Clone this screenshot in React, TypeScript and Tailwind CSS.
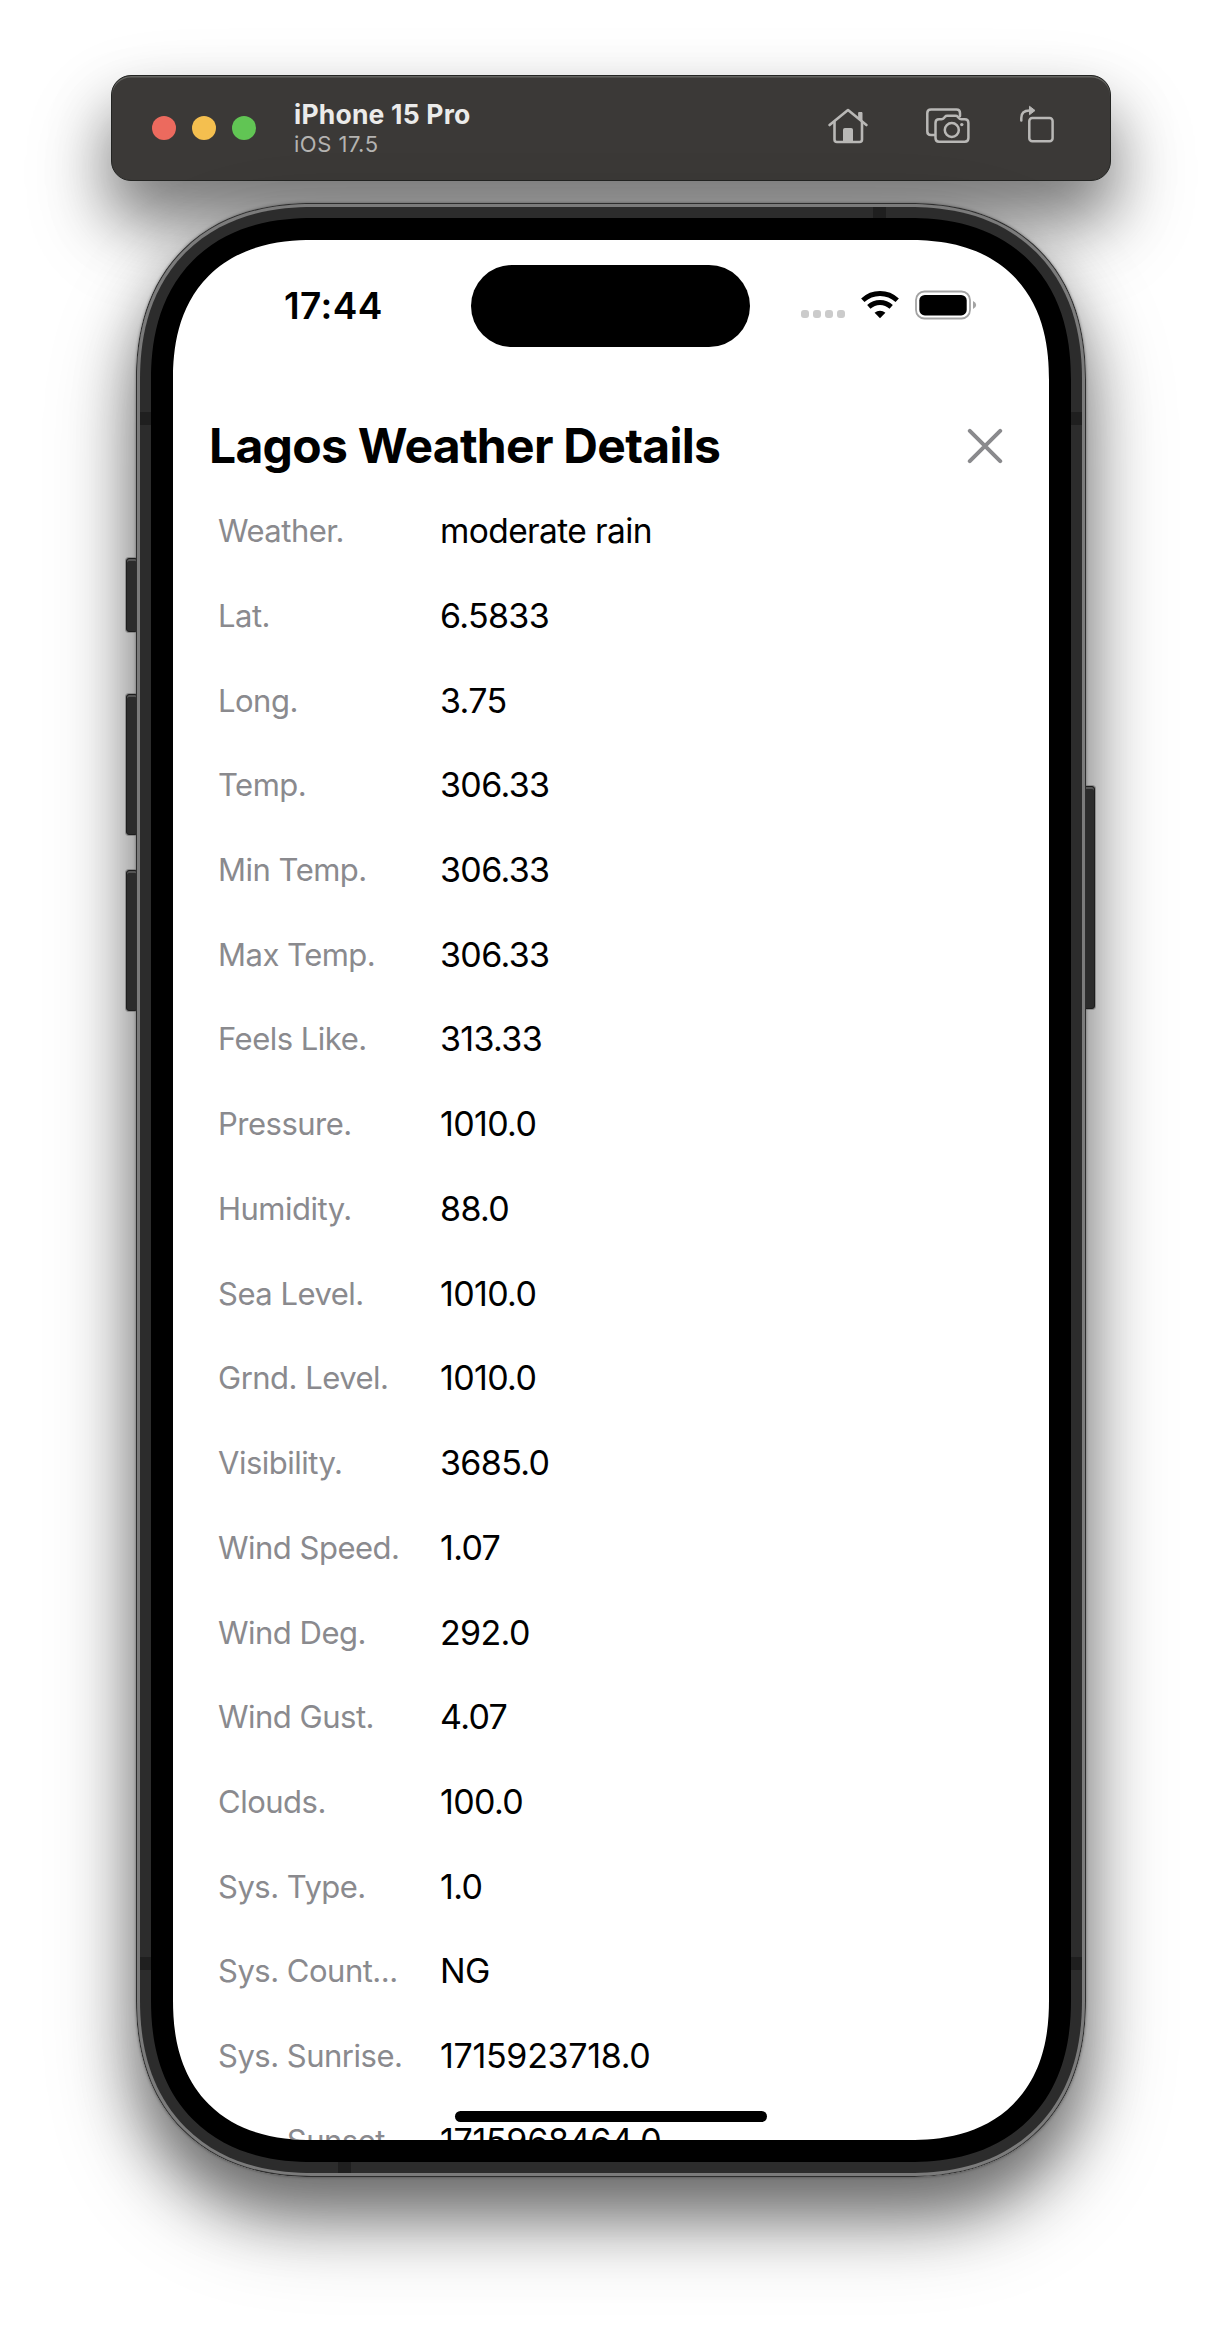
const rows: [string, string][] = [
  ["Weather.", "moderate rain"],
  ["Lat.", "6.5833"],
  ["Long.", "3.75"],
  ["Temp.", "306.33"],
  ["Min Temp.", "306.33"],
  ["Max Temp.", "306.33"],
  ["Feels Like.", "313.33"],
  ["Pressure.", "1010.0"],
  ["Humidity.", "88.0"],
  ["Sea Level.", "1010.0"],
  ["Grnd. Level.", "1010.0"],
  ["Visibility.", "3685.0"],
  ["Wind Speed.", "1.07"],
  ["Wind Deg.", "292.0"],
  ["Wind Gust.", "4.07"],
  ["Clouds.", "100.0"],
  ["Sys. Type.", "1.0"],
  ["Sys. Count...", "NG"],
  ["Sys. Sunrise.", "1715923718.0"],
  ["Sys. Sunset.", "1715968464.0"],
];

function HomeIcon() {
  return (
    <svg width="40" height="36" viewBox="0 0 40 36" fill="none" stroke="#b9b8b6" strokeWidth="2.6" strokeLinecap="round" strokeLinejoin="round">
      <path d="M1.6 17 L20 2 L38.4 17" />
      <path d="M6.5 14 V31.5 Q6.5 34 9 34 H31.5 Q34 34 34 31.5 V14" />
      <path d="M31 4.5 H34 V13 L31 10.5 Z" fill="#b9b8b6" strokeWidth="1" />
      <path d="M15.5 34 V21.5 Q15.5 20.5 16.5 20.5 H23.5 Q24.5 20.5 24.5 21.5 V34 Z" fill="#b9b8b6" strokeWidth="1" />
    </svg>
  );
}

function ScreenshotIcon() {
  return (
    <svg width="44" height="36" viewBox="0 0 44 36" fill="none" stroke="#b9b8b6" strokeWidth="2.5" strokeLinecap="round" strokeLinejoin="round">
      <path d="M8.5 27 H5 Q1.3 27 1.3 23.5 V5 Q1.3 1.5 5 1.5 H30.5 Q34 1.5 34 5 V8" />
      <path d="M9.5 15 Q9.5 11.3 13 11.3 H15.5 Q17 11.3 18 10 L19 8.8 Q19.8 7.8 21.2 7.8 H29.5 Q31 7.8 31.8 8.8 L32.8 10 Q33.8 11.3 35.3 11.3 H38.8 Q42.4 11.3 42.4 15 V30 Q42.4 33.7 38.8 33.7 H13 Q9.5 33.7 9.5 30 Z" />
      <circle cx="25.8" cy="22" r="7" />
      <circle cx="35.8" cy="16.6" r="1.7" fill="#b9b8b6" stroke="none" />
    </svg>
  );
}

function RotateIcon() {
  return (
    <svg width="34" height="38" viewBox="0 0 34 38" fill="none" stroke="#b9b8b6" strokeWidth="2.5" strokeLinecap="round">
      <rect x="9.3" y="13" width="23.3" height="23.3" rx="3" />
      <path d="M1.3 15.5 V13 Q1.3 5.5 9.5 5.5" />
      <path d="M9.8 1.5 L15 5.5 L9.8 9.5 Z" fill="#b9b8b6" strokeWidth="1" strokeLinejoin="round" />
    </svg>
  );
}

function WifiIcon() {
  return (
    <svg width="38" height="28" viewBox="0 0 38 28" fill="none" stroke="#000" strokeWidth="4.9">
      <path d="M1.8 9.3 C11.5 .2 26.5 .2 36.2 9.3" />
      <path d="M7.8 15.9 C14.3 10 23.7 10 30.2 15.9" />
      <path d="M19 27.2 L13.6 21.8 C16.7 19 21.3 19 24.4 21.8 Z" fill="#000" stroke="none" />
    </svg>
  );
}

function BatteryIcon() {
  return (
    <svg width="62" height="30" viewBox="0 0 62 30" fill="none">
      <rect x="1" y="1.5" width="54" height="27" rx="8.5" stroke="#a3a3a3" strokeWidth="1.8" />
      <rect x="4.3" y="5" width="47.4" height="20.4" rx="5.5" fill="#000" />
      <path d="M58 11 Q61.2 12.5 61.2 15 Q61.2 17.5 58 19 Z" fill="#a3a3a3" />
    </svg>
  );
}

function Toolbar() {
  return (
    <header className="box-border flex h-[106px] w-[1000px] items-center rounded-[20px] border border-[#232422] bg-[#3b3937] pl-10 pr-[56px] shadow-[inset_0_1.5px_0_#646461,0_36px_60px_rgba(0,0,0,0.4),0_44px_90px_rgba(0,0,0,0.24)]">
      <div className="flex gap-4">
        <span className="size-6 rounded-full bg-[#ec6a5e]" />
        <span className="size-6 rounded-full bg-[#f4bf4f]" />
        <span className="size-6 rounded-full bg-[#61c554]" />
      </div>
      <div className="ml-[38px] flex flex-1 flex-col pt-px">
        <div className="text-[26.5px] leading-[31px] font-bold tracking-[0.2px] text-[#ebebea]">iPhone 15 Pro</div>
        <div className="text-[22px] leading-[28px] tracking-[0.5px] text-[#b4b3b1]">iOS 17.5</div>
      </div>
      <div className="flex items-center pb-1">
        <HomeIcon />
        <div className="ml-[58px]"><ScreenshotIcon /></div>
        <div className="-mt-1 ml-[50px]"><RotateIcon /></div>
      </div>
    </header>
  );
}

function SideButton({ className }: { className: string }) {
  return (
    <div className={"absolute rounded-[3px] border border-[#1d1d1d] bg-[#2c2c2c] shadow-[inset_0_2px_0_#555,0_0_0_1px_rgba(110,110,110,0.6)] " + className} />
  );
}

function Antenna({ className }: { className: string }) {
  return <div className={"absolute bg-[#1f1f1f] " + className} />;
}

export default function App() {
  return (
    <div className="flex h-[2328px] w-[1222px] flex-col items-center overflow-hidden bg-white pt-[75px] font-['Inter','Liberation_Sans',sans-serif]">
      <Toolbar />
      <div className="relative mt-[22px] h-[1974px] w-[950px] shrink-0 rounded-[177px] [corner-shape:superellipse(1.18)] shadow-[0_36px_60px_rgba(0,0,0,0.44),0_44px_90px_rgba(0,0,0,0.28),0_0_3px_rgba(0,0,0,0.4)]">
        <SideButton className="top-[355px] -left-[10px] h-[74px] w-3" />
        <SideButton className="top-[491px] -left-[10px] h-[141px] w-3" />
        <SideButton className="top-[667px] -left-[10px] h-[141px] w-3" />
        <SideButton className="top-[583px] -right-[9px] h-[223px] w-3" />
        <div className="relative h-full rounded-[177px] border border-[#2e2e2e] bg-[#7b7b7b] p-[3px] [corner-shape:superellipse(1.18)]">
          <div className="relative h-full rounded-[173px] bg-[#2c2c2c] p-[11px] [corner-shape:superellipse(1.18)]">
            <Antenna className="top-[205px] left-0 h-[13px] w-[11px]" />
            <Antenna className="top-[205px] right-0 h-[13px] w-[11px]" />
            <Antenna className="top-[1750px] left-0 h-[13px] w-[11px]" />
            <Antenna className="top-[1750px] right-0 h-[13px] w-[11px]" />
            <Antenna className="top-0 left-[733px] h-[11px] w-[13px]" />
            <Antenna className="bottom-0 left-[198px] h-[11px] w-[13px]" />
            <div className="h-full rounded-[162px] bg-black p-[22px] [corner-shape:superellipse(1.2)]">
              <main className="relative h-[1900px] w-[876px] overflow-hidden rounded-[140px] bg-white [corner-shape:superellipse(1.23)]">
                <div className="flex h-[132px] items-center pr-[73px] pl-[111px]">
                  <div className="w-[187px] text-[37px] font-semibold tracking-[0.4px] text-black">17:44</div>
                  <div className="h-[82px] w-[279px] rounded-full bg-black" />
                  <div className="-mt-0.5 ml-auto flex w-[175px] shrink-0 items-center">
                    <div className="mt-[18px] flex gap-1">
                      <span className="size-2 rounded-[3px] bg-[#cbcbcb]" />
                      <span className="size-2 rounded-[3px] bg-[#cbcbcb]" />
                      <span className="size-2 rounded-[3px] bg-[#cbcbcb]" />
                      <span className="size-2 rounded-[3px] bg-[#cbcbcb]" />
                    </div>
                    <div className="ml-4"><WifiIcon /></div>
                    <div className="ml-4"><BatteryIcon /></div>
                  </div>
                </div>
                <div className="mt-[44px] flex h-[60px] items-center justify-between pr-[46px] pl-9">
                  <h1 className="text-[48px] leading-[60px] font-bold tracking-[-0.72px] text-black">Lagos Weather Details</h1>
                  <svg width="36" height="36" viewBox="0 0 36 36" stroke="#8a8a8d" strokeWidth="4" strokeLinecap="round">
                    <path d="M2.8 2.8 L33.2 33.2 M33.2 2.8 L2.8 33.2" />
                  </svg>
                </div>
                <ul className="mt-[12.8px]">
                  {rows.map(([label, value], i) => (
                    <li key={label} className="flex h-[84.73px] items-center pl-[45px]">
                      <span className="w-[190px] truncate text-[31px] leading-[40px] tracking-[-0.5px] text-[#8a8a8e]">{label}</span>
                      <span className={i === 0 ? "ml-8 text-[33.5px] leading-[42px] tracking-[-0.6px] text-black" : i >= 18 ? "ml-8 text-[34px] leading-[42px] tracking-[-0.3px] text-black" : "ml-8 text-[34px] leading-[42px] tracking-[-0.65px] text-black"}>{value}</span>
                    </li>
                  ))}
                </ul>
                <div className="absolute bottom-[18px] left-[282px] h-[11px] w-[312px] rounded-full bg-black" />
              </main>
            </div>
          </div>
        </div>
      </div>
    </div>
  );
}
